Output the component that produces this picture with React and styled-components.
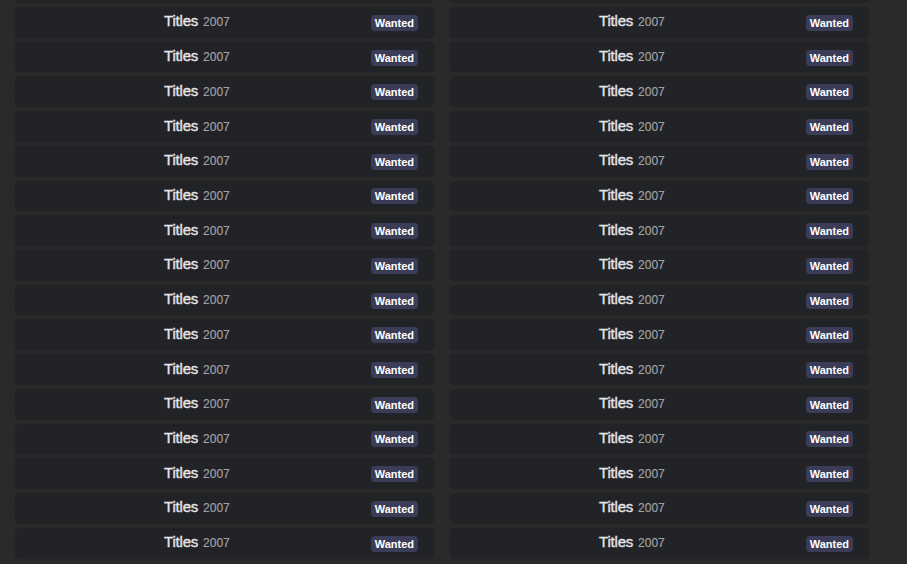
import React from "react";
import styled, { createGlobalStyle } from "styled-components";

const Global = createGlobalStyle`
  html, body { margin: 0; padding: 0; background: #2a2a2b; overflow: hidden; }
  body { font-family: "Liberation Sans", Arial, sans-serif; }
`;

const Page = styled.div`
  width: 907px;
  height: 564px;
  overflow: hidden;
  background: #2a2a2b;
`;

const Grid = styled.div`
  display: grid;
  grid-template-columns: 419px 419px;
  column-gap: 16px;
  row-gap: 4px;
  grid-auto-rows: 30.73px;
  padding-left: 15px;
  margin-top: -27.73px;
`;

const Card = styled.div`
  display: flex;
  align-items: center;
  box-sizing: border-box;
  padding: 0 16px 0 149px;
  background: #222327;
  border-radius: 5px;
  box-shadow: 0 0 1px rgba(0, 0, 0, 0.35);
`;

const Title = styled.div`
  flex: 1;
  display: flex;
  align-items: baseline;
  gap: 5px;
  margin-top: -3px;
`;

const Name = styled.span`
  font-size: 15px;
  font-weight: 500;
  color: #e6e6e8;
  letter-spacing: -0.2px;
  -webkit-text-stroke: 0.35px #e6e6e8;
`;

const Year = styled.span`
  font-size: 12px;
  color: #a2a2a6;
  -webkit-text-stroke: 0.15px #a2a2a6;
`;

const Badge = styled.span`
  display: inline-flex;
  align-items: center;
  height: 16px;
  padding: 0 4px;
  border-radius: 4px;
  background: #3b3c57;
  color: #ffffff;
  font-size: 11px;
  font-weight: 700;
  margin-top: 1px;
`;

const rows = 17;
const items = Array.from({ length: rows * 2 }, (_, i) => i);

export default function App() {
  return (
    <Page>
      <Global />
      <Grid>
        {items.map((i) =>
          i < 2 ? (
            <Card key={i} />
          ) : (
            <Card key={i}>
              <Title>
                <Name>Titles</Name>
                <Year>2007</Year>
              </Title>
              <Badge>Wanted</Badge>
            </Card>
          )
        )}
      </Grid>
    </Page>
  );
}
